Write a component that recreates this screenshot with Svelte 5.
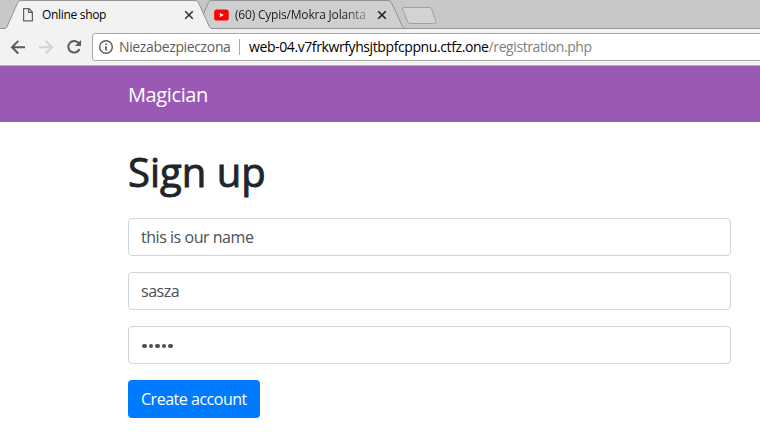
<script>
  let name = $state('this is our name');
  let login = $state('sasza');
  let password = $state('sasza');
</script>

<div class="window">
  <div class="tabs">
    <svg class="shapes" width="760" height="29" viewBox="0 0 760 29">
      <path d="M197 28.5 L208.5 2.5 Q209.3 .5 211.5 .5 H388 Q390.5 .5 391.5 2.7 L402.5 26.5 Q403.5 28.5 406 28.5Z" fill="#cfcfcf" stroke="#929292" />
      <path d="M0 28.5 H760" stroke="#959595" />
      <path d="M4 29 Q6.2 28.5 7 26.8 L17.7 2.6 Q18.7 .5 21 .5 H195 Q197.5 .5 198.5 2.7 L209.3 26.5 Q210.2 28.5 212 29Z" fill="#f2f2f2" />
      <path d="M4 28.5 Q6.2 28.5 7 26.8 L17.7 2.6 Q18.7 .5 21 .5 H195 Q197.5 .5 198.5 2.7 L209.3 26.5 Q210.2 28.5 212 28.5" fill="none" stroke="#929292" />
      <path d="M404 7.5 H429.5 Q431 7.5 431.7 9 L436 21.5 Q436.5 23.5 434.5 23.5 H410 Q408.5 23.5 407.8 22 L402.5 9.5 Q401.8 7.5 404 7.5Z" fill="#d3d3d3" stroke="#a0a0a0" />
    </svg>
    <div class="tab first">
      <svg width="12" height="16" viewBox="0 0 12 16" fill="none" stroke="#606060" stroke-width="1.2">
        <path d="M1.6 1.6 H7 L10.4 5 V13.9 H1.6Z M6.6 1.6 V5.4 H10.4" />
      </svg>
      <span class="title">Online shop</span>
      <svg class="close" width="10" height="10" viewBox="0 0 10 10"><path d="M1.2 1.2 L8.8 8.8 M8.8 1.2 L1.2 8.8" stroke="#353535" stroke-width="1.6" /></svg>
    </div>
    <div class="tab second">
      <svg width="15" height="16" viewBox="0 0 15 16">
        <rect x="0.2" y="2.5" width="14.5" height="11" rx="2.6" fill="#f00" />
        <path d="M5.8 5.7 L9.7 8 L5.8 10.3Z" fill="#fff" />
      </svg>
      <span class="title yt">(60) Cypis/Mokra Jolanta</span>
      <svg class="close" width="10" height="10" viewBox="0 0 10 10"><path d="M1.2 1.2 L8.8 8.8 M8.8 1.2 L1.2 8.8" stroke="#202020" stroke-width="1.6" /></svg>
    </div>
  </div>

  <div class="toolbar">
    <svg class="nav" width="92" height="36" viewBox="0 0 92 36" fill="none" stroke-width="2">
      <path d="M25 18.2 H12.3 M18.3 11.9 L12 18.2 L18.3 24.5" stroke="#5a5a5e" />
      <path d="M39 18.2 H51.7 M45.7 11.9 L52 18.2 L45.7 24.5" stroke="#d2d2d4" />
      <path d="M78.7 14.2 A5.8 5.8 0 1 0 79.5 20" stroke="#5a5a5e" />
      <path d="M81 11 V17 H75Z" fill="#5a5a5e" />
    </svg>
    <div class="address">
      <svg width="16" height="16" viewBox="0 0 16 16">
        <circle cx="8" cy="8" r="6.3" fill="none" stroke="#5a5a5a" stroke-width="1.4" />
        <path d="M8 7.2 V11.4 M8 4.5 V6" stroke="#4a4a4a" stroke-width="1.6" />
      </svg>
      <span class="status">Niezabezpieczona</span>
      <span class="divider"></span>
      <span class="url">web-04.v7frkwrfyhsjtbpfcppnu.ctfz.one<span class="path">/registration.php</span></span>
    </div>
  </div>

  <nav class="navbar"><span>Magician</span></nav>

  <main>
    <h1>Sign up</h1>
    <form onsubmit={(e) => e.preventDefault()}>
      <input class="name" bind:value={name} aria-label="Name" />
      <input class="login" bind:value={login} aria-label="Login" />
      <div class="field" role="img" aria-label="Password">
        {#each password as _}<i></i>{/each}
      </div>
      <button><span>Create account</span></button>
    </form>
  </main>
</div>

<style>
  .window {
    width: 760px;
    height: 440px;
    overflow: hidden;
    background: #fff;
    font-family: "Open Sans", "Noto Sans", sans-serif;
    color: #212529;
  }
  .window *, .window { box-sizing: border-box; }
  svg { display: block; flex: none; }
  .tabs {
    position: relative;
    display: flex;
    height: 29px;
    background: #c8c8c8;
  }
  .shapes { position: absolute; inset: 0; }
  .tab {
    position: relative;
    display: flex;
    align-items: center;
    height: 30px;
    font-size: 12px;
    color: #000;
    white-space: nowrap;
  }
  .first { width: 194px; padding-left: 22px; }
  .second { width: 193px; padding-left: 20px; }
  .title { margin-left: 8px; padding-bottom: 1px; letter-spacing: -0.32px; }
  .title.yt {
    margin-left: 6px;
    width: 133px;
    overflow: hidden;
    letter-spacing: -0.2px;
    color: #222;
    -webkit-mask-image: linear-gradient(to right, #000 108px, rgba(0, 0, 0, .3) 133px);
    mask-image: linear-gradient(to right, #000 108px, rgba(0, 0, 0, .3) 133px);
  }
  .close { margin-left: auto; }
  .toolbar {
    display: flex;
    height: 37px;
    background: #f2f2f2;
    border-bottom: 1px solid #b3b3b3;
  }
  .nav { flex: none; }
  .address {
    display: flex;
    align-items: center;
    width: 680px;
    flex: none;
    height: 28px;
    margin-top: 4px;
    padding-left: 5px;
    border: 1px solid #a9a9a9;
    border-radius: 3px;
    background: #fff;
    font-size: 14px;
    white-space: nowrap;
    color: #000;
  }
  .status { width: 113px; margin-left: 5px; padding-bottom: 1px; color: #5d5d5d; letter-spacing: -0.36px; }
  .divider { width: 1px; height: 16px; margin: 0 9px 0 7px; background: #aaa; }
  .url { padding-bottom: 1px; letter-spacing: -0.4px; }
  .path { color: #808080; }
  .navbar {
    display: flex;
    align-items: center;
    height: 56px;
    padding: 0 0 0 128px;
    background: #9b59b6;
    color: #fff;
    font-size: 20px;
    letter-spacing: -0.38px;
  }
  main { padding: 26px 29px 0 128px; }
  h1 {
    margin: 0 0 22px;
    font-size: 40px;
    line-height: 48px;
    font-weight: 400;
    -webkit-text-stroke: 0.9px #212529;
    letter-spacing: 0;
  }
  form { display: flex; flex-direction: column; align-items: flex-start; gap: 16px; }
  input, .field {
    display: flex;
    align-items: center;
    width: 603px;
    height: 38px;
    margin: 0;
    padding: 0 12px;
    border: 1px solid #ced4da;
    border-radius: 4px;
    outline: none;
    background: #fff;
    color: #495057;
    font: 16px/24px "Open Sans", "Noto Sans", sans-serif;
    letter-spacing: -0.46px;
  }
  .field { gap: 2.1px; padding: 2px 0 0 13px; }
  .field i { width: 4.5px; height: 4.5px; border-radius: 50%; background: #495057; }
  button {
    width: 132px;
    height: 38px;
    padding: 0 0 0 13px;
    border: 0;
    border-radius: 4px;
    background: #007bff;
    color: #fff;
    font: 16px/24px "Open Sans", "Noto Sans", sans-serif;
    letter-spacing: -0.48px;
    text-align: left;
    white-space: nowrap;
  }
</style>
